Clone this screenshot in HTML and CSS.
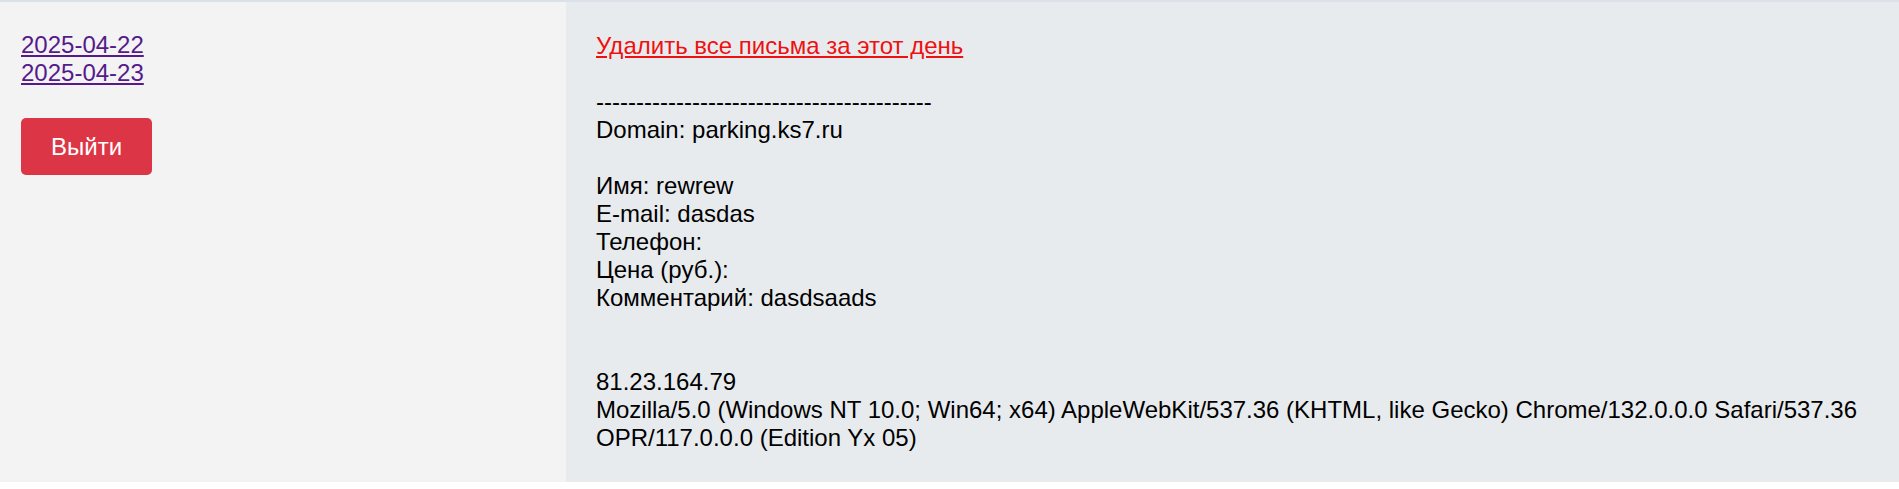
FILE: index.html
```html
<!DOCTYPE html>
<html lang="ru">
<head>
<meta charset="utf-8">
<title>Письма</title>
<link rel="stylesheet" href="styles.css">
</head>
<body>
<div class="layout">
  <aside class="sidebar">
    <div class="dates">
      <a class="date-link" href="#">2025-04-22</a><br>
      <a class="date-link" href="#">2025-04-23</a>
    </div>
    <button class="btn-logout" type="button">Выйти</button>
  </aside>
  <main class="content">
    <a class="delete-link" href="#">Удалить все письма за этот день</a><br>
    <br>
    ------------------------------------------<br>
    Domain: parking.ks7.ru<br>
    <br>
    Имя: rewrew<br>
    E-mail: dasdas<br>
    Телефон: <br>
    Цена (руб.): <br>
    Комментарий: dasdsaads<br>
    <br>
    <br>
    81.23.164.79<br>
    Mozilla/5.0 (Windows NT 10.0; Win64; x64) AppleWebKit/537.36 (KHTML, like Gecko) Chrome/132.0.0.0 Safari/537.36 OPR/117.0.0.0 (Edition Yx 05)
  </main>
</div>
</body>
</html>
```
FILE: styles.css
```css
html, body {
  margin: 0;
  padding: 0;
  background: #ffffff;
}

body {
  font-family: "Liberation Sans", Arial, sans-serif;
  font-size: 24px;
  line-height: 28px;
  color: #000;
}

.layout {
  display: flex;
  border-top: 2px solid #dae1e8;
}

.sidebar {
  width: 566px;
  flex: 0 0 566px;
  box-sizing: border-box;
  padding: 29px 20px 30px 21px;
  background: #f3f3f3;
}

.date-link {
  color: #551a8b;
  text-decoration: underline;
}

.btn-logout {
  display: block;
  margin-top: 31px;
  width: 131px;
  height: 57px;
  padding: 0;
  border: none;
  border-radius: 5px;
  background: #dc3545;
  color: #fff;
  font-family: "Liberation Sans", Arial, sans-serif;
  font-size: 24px;
  line-height: 28px;
  cursor: pointer;
}

.content {
  flex: 1 1 auto;
  box-sizing: border-box;
  padding: 30px 30px 30px 30px;
  background: #e8ebee;
}

.delete-link {
  color: #ee1111;
  text-decoration: underline;
}
```
